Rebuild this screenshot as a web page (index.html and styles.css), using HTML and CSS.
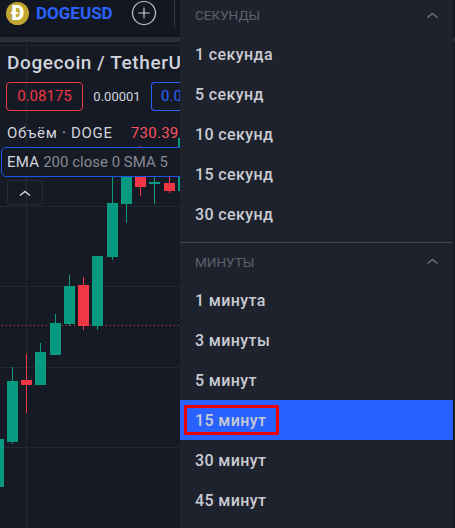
FILE: index.html
```html
<!DOCTYPE html>
<html lang="ru">
<head>
  <meta charset="UTF-8">
  <title>DOGEUSD</title>
  <link rel="stylesheet" href="styles.css">
</head>
<body>

<div class="app">
  <header class="topbar">
    <div class="coin">Ð</div>
    <div class="ticker">DOGEUSD</div>
    <svg class="add" width="26" height="26" viewBox="0 0 26 26">
      <circle cx="13" cy="13" r="11.5"></circle>
      <path d="M13 7.5v11M7.5 13h11"></path>
    </svg>
    <div class="topbar-sep"></div>
  </header>
  <div class="bar-gap"></div>

  <div class="chart">
    <svg class="plot" width="455" height="486" viewBox="0 42 455 486">
      <g class="grid">
        <path d="M0 45.5h180M0 206.5h180M0 286.5h180M0 367.5h180M0 447.5h180M26.500 42v486"></path>
      </g>
      <path class="last-price" d="M2 325.500h178"></path>
      <g class="up">
        <rect x="0" y="439" width="4" height="48"></rect>
        <rect x="12" y="367" width="1" height="77"></rect>
        <rect x="7" y="381" width="11" height="61"></rect>
        <rect x="40" y="343" width="1" height="12"></rect>
        <rect x="35" y="352" width="11" height="33"></rect>
        <rect x="55" y="314" width="1" height="12"></rect>
        <rect x="50" y="323" width="11" height="32"></rect>
        <rect x="69" y="275" width="1" height="51"></rect>
        <rect x="64" y="286" width="11" height="38"></rect>
        <rect x="97" y="256" width="1" height="74"></rect>
        <rect x="92" y="256" width="11" height="70"></rect>
        <rect x="112" y="176" width="1" height="84"></rect>
        <rect x="107" y="203" width="11" height="54"></rect>
        <rect x="126" y="176" width="1" height="47"></rect>
        <rect x="121" y="176" width="11" height="28"></rect>
        <rect x="154" y="176" width="1" height="28"></rect>
        <rect x="149" y="182" width="11" height="2"></rect>
        <rect x="178" y="138" width="2" height="53"></rect>
      </g>
      <g class="down">
        <rect x="26" y="354" width="1" height="59"></rect>
        <rect x="21" y="380" width="11" height="5"></rect>
        <rect x="83" y="277" width="1" height="53"></rect>
        <rect x="78" y="285" width="11" height="41"></rect>
        <rect x="140" y="146" width="1" height="50"></rect>
        <rect x="135" y="177" width="11" height="10"></rect>
        <rect x="169" y="177" width="1" height="16"></rect>
        <rect x="164" y="183" width="11" height="8"></rect>
      </g>
    </svg>

    <div class="legend">
      <div class="pair">Dogecoin / TetherU</div>
      <div class="prices">
        <div class="price-box sell">0.08175</div>
        <div class="spread">0.00001</div>
        <div class="price-box buy">0.0</div>
      </div>
      <div class="volume"><span>Объём · DOGE</span><span class="volume-val">730.39</span></div>
      <div class="study"><b>EMA</b> 200 close 0 SMA 5</div>
      <div class="collapse">
        <svg width="12" height="8" viewBox="0 0 12 8"><path d="M1 6.500l5-4 5 4"></path></svg>
      </div>
    </div>
  </div>

  <div class="menu">
    <div class="menu-head first">
      <span>СЕКУНДЫ</span>
      <svg width="11" height="7" viewBox="0 0 11 7"><path d="M.5 5.500l5-4 5 4"></path></svg>
    </div>
    <div class="menu-item">1 секунда</div>
    <div class="menu-item">5 секунд</div>
    <div class="menu-item">10 секунд</div>
    <div class="menu-item">15 секунд</div>
    <div class="menu-item">30 секунд</div>

    <div class="menu-sep"></div>

    <div class="menu-head">
      <span>МИНУТЫ</span>
      <svg width="11" height="7" viewBox="0 0 11 7"><path d="M.5 5.500l5-4 5 4"></path></svg>
    </div>
    <div class="menu-item">1 минута</div>
    <div class="menu-item">3 минуты</div>
    <div class="menu-item">5 минут</div>
    <div class="menu-item active"><span class="marked">15 минут</span></div>
    <div class="menu-item">30 минут</div>
    <div class="menu-item">45 минут</div>
  </div>
</div>

</body>
</html>
```

FILE: styles.css
```css
html, body {
  margin: 0;
  height: 100%;
  overflow: hidden;
  background: #131722;
}

body {
  font-family: 'Roboto', 'Liberation Sans', sans-serif;
  color: #d1d4dc;
}

.app {
  position: relative;
  width: 455px;
  height: 528px;
  overflow: hidden;
  display: flex;
  flex-direction: column;
}

/* top bar */
.topbar {
  height: 37px;
  flex: none;
  background: #131722;
  display: flex;
  align-items: flex-start;
  padding-left: 6px;
  box-sizing: border-box;
}

.coin {
  width: 23px;
  height: 23px;
  margin-top: 2px;
  border-radius: 50%;
  background: #c2a633;
  color: #fff;
  font-size: 20px;
  font-weight: 900;
  line-height: 23px;
  text-align: center;
}

.ticker {
  width: 75px;
  margin: 1px 0 0 7px;
  color: #2962ff;
  font-size: 17px;
  font-weight: 700;
  line-height: 25px;
  white-space: nowrap;
}

.add {
  margin-left: 20px;
  fill: none;
  stroke: #c4c7cf;
  stroke-width: 1.2;
}

.topbar-sep {
  width: 1px;
  height: 27px;
  margin-left: 17px;
  background: #363a45;
}

.bar-gap {
  height: 5px;
  flex: none;
  background: #2a2e39;
}

/* chart */
.chart {
  position: relative;
  flex: 1;
  background: #161a25;
}

.plot {
  position: absolute;
  left: 0;
  top: 0;
}

.grid path {
  fill: none;
  stroke: #232732;
  stroke-width: 1;
}

.last-price {
  fill: none;
  stroke: #f23645;
  stroke-width: 1;
  stroke-dasharray: 1 3;
}

.up rect {
  fill: #089981;
}

.down rect {
  fill: #f23645;
}

.legend {
  position: absolute;
  left: 0;
  top: 0;
  width: 180px;
  height: 170px;
  overflow: hidden;
}

.pair {
  margin: 10px 0 0 7px;
  font-size: 19px;
  font-weight: 500;
  line-height: 22px;
  letter-spacing: 0.6px;
  white-space: nowrap;
}

.prices {
  display: flex;
  align-items: center;
  margin: 8px 0 0 6px;
}

.price-box {
  flex: none;
  box-sizing: border-box;
  width: 77px;
  height: 29px;
  border: 1px solid;
  border-radius: 4px;
  font-size: 15px;
  line-height: 27px;
  text-align: center;
}

.sell {
  border-color: #f23645;
  color: #f23645;
}

/* the rest of this box is hidden by the menu */
.buy {
  width: 29px;
  padding-left: 9px;
  border-color: #2962ff;
  border-right: 0;
  border-radius: 4px 0 0 4px;
  color: #2962ff;
  text-align: left;
}

.spread {
  flex: none;
  width: 68px;
  font-size: 13px;
  text-align: center;
}

.volume {
  display: flex;
  margin: 12px 0 0 7px;
  font-size: 15px;
  line-height: 20px;
  letter-spacing: 0.7px;
  white-space: nowrap;
}

.volume-val {
  margin-left: 18px;
  color: #f7525f;
  letter-spacing: 0.3px;
}

.study {
  box-sizing: border-box;
  width: 200px;
  height: 30px;
  margin: 4px 0 0 1px;
  padding-left: 5px;
  border: 1px solid #1e53e5;
  border-radius: 5px;
  background: #161a25;
  color: #868993;
  font-size: 15px;
  line-height: 28px;
  white-space: nowrap;
}

.study b {
  color: #d1d4dc;
  font-weight: 400;
  letter-spacing: 0.3px;
}

.collapse {
  box-sizing: border-box;
  width: 36px;
  height: 25px;
  margin: 3px 0 0 7px;
  border: 1px solid #2a2e39;
  border-radius: 4px;
  display: flex;
  align-items: center;
  justify-content: center;
}

.collapse path {
  fill: none;
  stroke: #d1d4dc;
  stroke-width: 1.5;
}

/* interval menu */
.menu {
  position: absolute;
  left: 180px;
  top: 0;
  width: 273px;
  height: 528px;
  overflow: hidden;
  background: #1e222d;
}

.menu-head {
  height: 37px;
  padding: 0 15px;
  display: flex;
  align-items: center;
  justify-content: space-between;
  color: #5d606b;
  font-size: 13.500px;
}

.menu-head.first {
  height: 30px;
  margin-bottom: 4px;
}

.menu-head path {
  fill: none;
  stroke: #787b86;
  stroke-width: 1.1;
}

.menu-item {
  height: 40px;
  padding-left: 15px;
  display: flex;
  align-items: center;
  font-size: 16px;
  font-weight: 500;
  letter-spacing: 0.4px;
  color: #c9cbd3;
}

.menu-item.active {
  background: #2962ff;
}

.marked {
  box-sizing: border-box;
  height: 30px;
  margin-left: -11px;
  padding: 0 10px 0 8px;
  display: flex;
  align-items: center;
  border: 3px solid #f00000;
  border-radius: 2px;
}

.menu-sep {
  height: 1px;
  margin-top: 8px;
  background: #434651;
}
```
